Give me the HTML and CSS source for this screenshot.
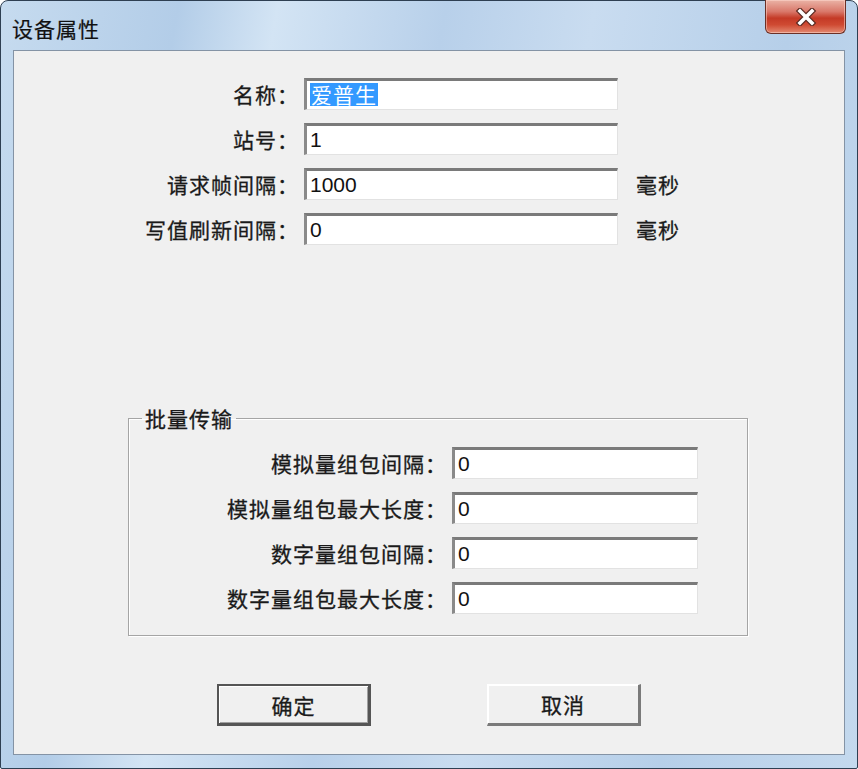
FILE: index.html
```html
<!DOCTYPE html>
<html lang="zh">
<head>
<meta charset="utf-8">
<title>设备属性</title>
<link rel="stylesheet" href="styles.css">
</head>
<body>
<div class="window">
  <div class="titlebar">
    <span class="title">设备属性</span>
    <button class="close" aria-label="关闭">
      <svg width="24" height="18" viewBox="0 0 24 18"><path d="M6 3 L18 15 M18 3 L6 15" stroke="#5a2a22" stroke-width="6" stroke-linecap="square"/><path d="M6 3 L18 15 M18 3 L6 15" stroke="#fff" stroke-width="3.6" stroke-linecap="square"/></svg>
    </button>
  </div>
  <div class="client">
    <div class="form">
      <label class="lbl">名称：</label>
      <div class="field"><span class="sel">爱普生</span></div>
      <span></span>
      <label class="lbl">站号：</label>
      <div class="field">1</div>
      <span></span>
      <label class="lbl">请求帧间隔：</label>
      <div class="field">1000</div>
      <span class="unit">毫秒</span>
      <label class="lbl">写值刷新间隔：</label>
      <div class="field">0</div>
      <span class="unit">毫秒</span>
    </div>
    <fieldset class="group">
      <legend>批量传输</legend>
      <div class="gform">
        <label class="lbl">模拟量组包间隔：</label>
        <div class="field">0</div>
        <label class="lbl">模拟量组包最大长度：</label>
        <div class="field">0</div>
        <label class="lbl">数字量组包间隔：</label>
        <div class="field">0</div>
        <label class="lbl">数字量组包最大长度：</label>
        <div class="field">0</div>
      </div>
    </fieldset>
    <div class="buttons">
      <button class="btn default">确定</button>
      <button class="btn">取消</button>
    </div>
  </div>
</div>
</body>
</html>
```
FILE: styles.css
```css
* { box-sizing: border-box; }
html, body { margin: 0; padding: 0; background: #fff; }
body { width: 858px; height: 769px; overflow: hidden; }

.window {
  width: 858px;
  height: 769px;
  border: 1px solid #2e3f52;
  border-radius: 8px 8px 2px 2px;
  background: linear-gradient(100deg, #c6dbef 0%, #b3cde8 18%, #d3e4f4 28%, #b8d0ea 45%, #c9dcf0 60%, #b6cfe9 80%, #c4d9ee 100%);
  padding: 0 12px 0 12px;
  display: flex;
  flex-direction: column;
  font-family: "Noto Sans CJK SC", "Noto Sans", sans-serif;
  color: #1a1a1a;
}

.titlebar {
  height: 49px;
  display: flex;
  align-items: flex-start;
  justify-content: space-between;
  flex: none;
}
.title {
  font-size: 21px;
  line-height: 21px;
  margin-top: 17px;
  margin-left: -1px;
  letter-spacing: 1px;
  color: #111;
  -webkit-text-stroke: 0.2px #111;
}
.close {
  width: 81px;
  height: 34px;
  margin-top: -1px;
  margin-right: -1px;
  border: 1px solid #6b3026;
  border-top: none;
  border-radius: 0 0 6px 6px;
  background: linear-gradient(#eab3a6 0%, #d9786a 35%, #c43a26 55%, #cf4a32 75%, #e38a72 100%);
  box-shadow: inset 0 0 0 1px rgba(255,220,210,0.5);
  display: flex;
  align-items: center;
  justify-content: center;
  padding: 0;
}

.client {
  height: 705px;
  border: 1px solid #8493a5;
  background: #f0f0f0;
  padding-top: 27px;
  flex: none;
}

.form {
  display: grid;
  grid-template-columns: 278px 314px auto;
  column-gap: 12px;
  row-gap: 13px;
  align-items: center;
}
.form .unit { margin-left: 6px; }

.lbl {
  font-size: 21px;
  text-align: right;
  white-space: nowrap;
  letter-spacing: 1px;
  margin-right: -7px;
  color: #1a1a1a;
  -webkit-text-stroke: 0.3px #1a1a1a;
}
.unit {
  font-size: 21px;
  letter-spacing: 1px;
  -webkit-text-stroke: 0.3px #1a1a1a;
}

.field {
  height: 32px;
  background: #fff;
  border-top: 3px solid #7a7a7a;
  border-left: 3px solid #8a8a8a;
  border-right: 1px solid #e2e2e2;
  border-bottom: 1px solid #e2e2e2;
  font-family: "Liberation Sans", Arial, sans-serif;
  font-size: 21px;
  line-height: 27px;
  padding-left: 3px;
  color: #111;
}
.sel {
  display: inline-block;
  background: #3399ff;
  color: #fff;
  font-family: "Noto Sans CJK SC", sans-serif;
  font-size: 21px;
  line-height: 23px;
  padding: 0 1px;
  letter-spacing: 1px;
  vertical-align: top;
  margin-top: 2px;
}

.group {
  margin: 161px 0 0 114px;
  width: 620px;
  height: 230px;
  padding: 17px 0 0 0;
  border: 1px solid #a5a5a5;
  box-shadow: inset 1px 1px 0 #fff, 1px 1px 0 #fff;
}
.group legend {
  font-size: 21px;
  line-height: 24px;
  padding: 0 3px;
  margin-left: 13px;
  letter-spacing: 1px;
  -webkit-text-stroke: 0.3px #1a1a1a;
}
.gform {
  display: grid;
  grid-template-columns: 311px 246px;
  column-gap: 12px;
  row-gap: 13px;
  align-items: center;
}

.buttons {
  display: flex;
  gap: 116px;
  padding-left: 203px;
  margin-top: 48px;
}
.btn {
  width: 154px;
  height: 42px;
  background: #f0f0f0;
  font-family: "Noto Sans CJK SC", sans-serif;
  font-size: 21px;
  letter-spacing: 1px;
  color: #1a1a1a;
  -webkit-text-stroke: 0.3px #1a1a1a;
  border: 1px solid #fff;
  border-right: 3px solid #7a7a7a;
  border-bottom: 3px solid #7a7a7a;
  box-shadow: inset 1px 1px 0 #fff;
  padding: 0;
}
.btn.default {
  border: 2px solid #555;
  border-right: 3px solid #555;
  border-bottom: 3px solid #555;
  box-shadow: inset 1px 1px 0 #fff, inset -1px -1px 0 #a0a0a0;
}
```
